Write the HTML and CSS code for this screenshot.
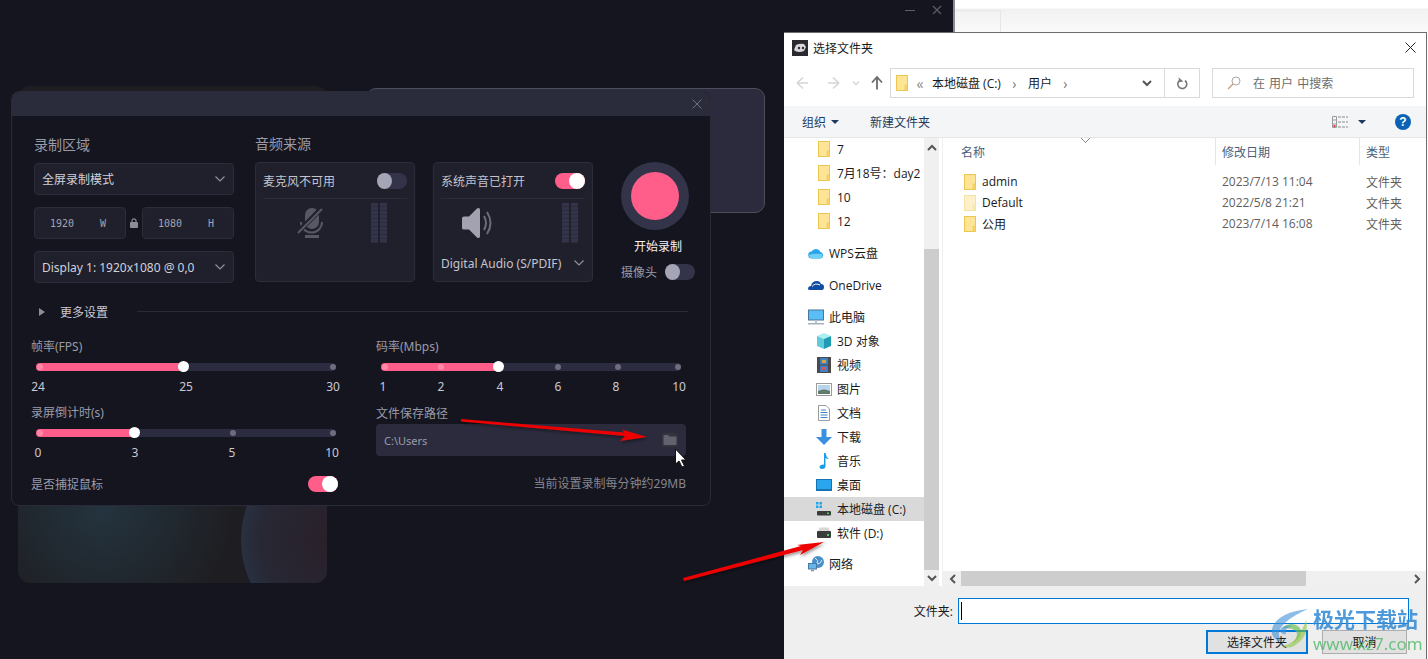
FILE: index.html
```html
<!DOCTYPE html>
<html lang="zh-CN">
<head>
  <meta charset="UTF-8" />
  <title>选择文件夹</title>
  <link rel="stylesheet" href="styles.css">
</head>
<body>
  <svg class="defs" width="0" height="0">
    <symbol id="folder" viewBox="0 0 12 16">
      <rect x="0.5" y="0.5" width="11" height="15" fill="#fde595" stroke="#ecc651"/>
      <rect x="9" y="10" width="2.5" height="5.5" fill="#f7d569" stroke="#ecc651" stroke-width="0.6"/>
    </symbol>
    <symbol id="drive" viewBox="0 0 16 12">
      <path d="M2 4 L3.5 0.5 H12.5 L14 4 Z" fill="#d8d8d8"/>
      <rect x="1" y="4" width="14" height="7" rx="1" fill="#3b3b3b"/>
      <rect x="11" y="7" width="2" height="2" fill="#41d65a"/>
    </symbol>
    <symbol id="chev" viewBox="0 0 12 8">
      <path d="M1.5 1.5 L6 6 L10.500 1.5" fill="none" stroke="currentColor" stroke-width="1.2"/>
    </symbol>
    <symbol id="bold-chev" viewBox="0 0 10 7">
      <path d="M1 1 L5 5 L9 1" fill="none" stroke="#555" stroke-width="2"/>
    </symbol>
  </svg>

  <!-- windows behind -->
  <div class="back-app">
    <div class="back-app-tab"></div>
  </div>
  <div class="back-ctrls">
    <span class="min-line"></span>
    <svg width="10" height="10" viewBox="0 0 10 10"><path d="M1 1 L9 9 M9 1 L1 9" stroke="#5d5d69" stroke-width="1.200"/></svg>
  </div>
  <div class="back-card"><div class="back-planet"></div></div>
  <div class="back-box"></div>

  <!-- recorder settings -->
  <div class="panel">
    <div class="panel-title">
      <svg width="10" height="10" viewBox="0 0 10 10"><path d="M0.500 0.500 L9.500 9.500 M9.500 0.500 L0.500 9.500" stroke="#6e6e7c" stroke-width="1"/></svg>
    </div>
    <div class="top">
      <div class="area">
        <div class="sec-title">录制区域</div>
        <div class="select"><span>全屏录制模式</span><svg class="chev" width="12" height="8"><use href="#chev"/></svg></div>
        <div class="size-row">
          <div class="size-box"><span>1920</span><span class="mono">W</span></div>
          <svg class="lock" width="8" height="10" viewBox="0 0 8 10"><path d="M2 4 V2.800 a2 2 0 0 1 4 0 V4" fill="none" stroke="#8d8d99" stroke-width="1.200"/><rect y="4" width="8" height="6" rx="1" fill="#8d8d99"/></svg>
          <div class="size-box"><span>1080</span><span class="mono">H</span></div>
        </div>
        <div class="select"><span>Display 1: 1920x1080 @ 0,0</span><svg class="chev" width="12" height="8"><use href="#chev"/></svg></div>
      </div>

      <div class="audio">
        <div class="sec-title">音频来源</div>
        <div class="audio-cards">
          <div class="audio-card mic">
            <div class="audio-head"><span>麦克风不可用</span><span class="toggle"></span></div>
            <div class="audio-body">
              <svg class="audio-icon" width="28" height="32" viewBox="0 0 28 32">
                <rect x="8" y="1" width="14" height="21" rx="7" fill="#575765"/>
                <path d="M4 15 a10.500 10.500 0 0 0 21 0" fill="none" stroke="#575765" stroke-width="2"/>
                <rect x="8" y="28" width="14" height="3" fill="#575765"/>
                <path d="M1 25 L25 1" stroke="#20202c" stroke-width="5"/>
                <path d="M1 26 L25 2" stroke="#575765" stroke-width="2"/>
              </svg>
              <div class="meter"></div>
            </div>
          </div>
          <div class="audio-card sys">
            <div class="audio-head"><span>系统声音已打开</span><span class="toggle on"></span></div>
            <div class="audio-body">
              <svg class="audio-icon speaker" width="34" height="32" viewBox="0 0 34 32">
                <path d="M1 11 Q1 9.500 3 9.500 H8 L16 1.500 Q19 0 19 3 V29 Q19 32 16 30.500 L8 22.500 H3 Q1 22.500 1 21 Z" fill="#a2a2b0"/>
                <path d="M23 9 Q27 16 23 23" fill="none" stroke="#6d6d7a" stroke-width="2"/>
                <path d="M26 5 Q33 16 26 27" fill="none" stroke="#6d6d7a" stroke-width="2"/>
              </svg>
              <div class="meter"></div>
            </div>
            <div class="audio-device"><span>Digital Audio (S/PDIF)</span><svg class="chev" width="12" height="8"><use href="#chev"/></svg></div>
          </div>
        </div>
      </div>

      <div class="record">
        <div class="record-btn"><span class="record-dot"></span></div>
        <div class="record-text">开始录制</div>
        <div class="camera"><span>摄像头</span><span class="toggle"></span></div>
      </div>
    </div>

    <div class="more">
      <span class="more-arrow"></span>
      <span class="more-text">更多设置</span>
      <span class="more-line"></span>
    </div>

    <div class="settings">
      <div class="field">
        <div class="field-label">帧率(FPS)</div>
        <div class="track">
          <span class="fill" style="width: 49%"></span>
          <span class="dot pale" style="left: 1px"></span>
          <span class="dot" style="left: 98%"></span>
          <span class="thumb" style="left: 49%"></span>
        </div>
        <div class="ticks">
          <span style="left: 2px">24</span>
          <span style="left: 150px">25</span>
          <span style="left: 297px">30</span>
        </div>
      </div>
      <div class="field">
        <div class="field-label">码率(Mbps)</div>
        <div class="track">
          <span class="fill" style="width: 39%"></span>
          <span class="dot pale" style="left: 1px"></span>
          <span class="dot pale" style="left: 19%"></span>
          <span class="dot" style="left: 58%"></span>
          <span class="dot" style="left: 78%"></span>
          <span class="dot" style="left: 98%"></span>
          <span class="thumb" style="left: 39%"></span>
        </div>
        <div class="ticks">
          <span style="left: 2px">1</span>
          <span style="left: 60px">2</span>
          <span style="left: 119px">4</span>
          <span style="left: 177px">6</span>
          <span style="left: 235px">8</span>
          <span style="left: 298px">10</span>
        </div>
      </div>
      <div class="field">
        <div class="field-label">录屏倒计时(s)</div>
        <div class="track">
          <span class="fill" style="width: 32.700%"></span>
          <span class="dot pale" style="left: 1px"></span>
          <span class="dot" style="left: 64.700%"></span>
          <span class="dot" style="left: 98%"></span>
          <span class="thumb" style="left: 32.700%"></span>
        </div>
        <div class="ticks">
          <span style="left: 2px">0</span>
          <span style="left: 99px">3</span>
          <span style="left: 196px">5</span>
          <span style="left: 296px">10</span>
        </div>
      </div>
      <div class="field">
        <div class="field-label path-label">文件保存路径</div>
        <div class="path-box">
          <span>C:\Users</span>
          <svg class="path-folder" width="16" height="14" viewBox="0 0 16 14">
            <rect x="0" y="0" width="16" height="14" rx="2" fill="#33333d"/>
            <path d="M1.500 3 Q1.500 2 2.500 2 H6 L7.500 3.500 H13.500 Q14.500 3.500 14.500 4.500 V11 Q14.500 12 13.500 12 H2.500 Q1.500 12 1.500 11 Z" fill="#62626f"/>
          </svg>
        </div>
      </div>
      <div class="capture"><span>是否捕捉鼠标</span><span class="toggle on"></span></div>
      <div class="size-note">当前设置录制每分钟约29MB</div>
    </div>
  </div>

  <!-- file dialog -->
  <div class="dialog">
    <div class="dlg-title">
      <svg class="dlg-logo" width="16" height="16" viewBox="0 0 16 16">
        <rect width="16" height="16" fill="#2a2a30"/>
        <path d="M2 10 L4 5 Q8 3 12 4 L14 7 L12 11 Q8 12.500 4 11.500 Z" fill="#d8d8dc"/>
        <circle cx="7" cy="8" r="1.200" fill="#2a2a30"/><circle cx="11" cy="8" r="1.200" fill="#2a2a30"/>
      </svg>
      <span class="dlg-title-text">选择文件夹</span>
      <svg class="dlg-close" width="11" height="11" viewBox="0 0 11 11"><path d="M0.500 0.500 L10.500 10.500 M10.500 0.500 L0.500 10.500" stroke="#222" stroke-width="1"/></svg>
    </div>

    <div class="dlg-nav">
      <svg class="nav-btns" width="98" height="16" viewBox="0 0 98 16">
        <path d="M2 8 H13 M2 8 L8 2.500 M2 8 L8 13.500" fill="none" stroke="#d5d5d5" stroke-width="1.600"/>
        <path d="M44 8 H33 M44 8 L38 2.500 M44 8 L38 13.500" fill="none" stroke="#d5d5d5" stroke-width="1.600"/>
        <path d="M58 6.500 L61 9.500 L64 6.500" fill="none" stroke="#d5d5d5" stroke-width="1.300"/>
        <path d="M82 14.500 V2 M77 7.500 L82 2 L87 7.500" fill="none" stroke="#6b6b6b" stroke-width="1.800"/>
      </svg>
      <div class="address">
        <svg width="12" height="16"><use href="#folder"/></svg>
        <span class="crumb-more">«</span>
        <span>本地磁盘 (C:)</span>
        <span class="crumb-sep">›</span>
        <span>用户</span>
        <span class="crumb-sep">›</span>
        <svg class="addr-chev" width="10" height="7"><use href="#bold-chev"/></svg>
        <span class="addr-refresh">
          <svg width="12" height="13" viewBox="0 0 12 13"><path d="M4 3.200 A4.500 4.500 0 1 0 9 3.500" fill="none" stroke="#777" stroke-width="1.600"/><path d="M3 0 V5 H7 Z" fill="#777" transform="rotate(-10 4 3)"/></svg>
        </span>
      </div>
      <div class="search">
        <svg width="14" height="14" viewBox="0 0 14 14"><circle cx="9" cy="5" r="4" fill="none" stroke="#a9a9a9"/><path d="M6 8 L1 13" stroke="#c49a7c" stroke-width="1.200"/></svg>
        <span>在 用户 中搜索</span>
      </div>
    </div>

    <div class="dlg-tools">
      <span class="tool">组织</span><span class="tool-caret organize-caret"></span>
      <span class="tool new-folder">新建文件夹</span>
      <span class="tool-spacer"></span>
      <svg class="view-icon" width="16" height="12" viewBox="0 0 16 12">
        <path d="M0.500 0.500 H4.500 V11.500 H0.500 Z M0.500 4 H4.500 M0.500 8 H4.500" fill="none" stroke="#9a9a9a"/>
        <rect x="1.500" y="9" width="2" height="2" fill="#d33"/>
        <path d="M6 1 H16 M6 6 H16 M6 11 H16" stroke="#8b8b8b" stroke-dasharray="3 1"/>
      </svg>
      <span class="tool-caret view-caret"></span>
      <span class="help">?</span>
    </div>

    <div class="dlg-main">
      <div class="tree">
        <div class="tree-row lvl2 first"><svg class="ico" width="12" height="16"><use href="#folder"/></svg>7</div>
        <div class="tree-row lvl2"><svg class="ico" width="12" height="16"><use href="#folder"/></svg>7月18号：day2</div>
        <div class="tree-row lvl2"><svg class="ico" width="12" height="16"><use href="#folder"/></svg>10</div>
        <div class="tree-row lvl2"><svg class="ico" width="12" height="16"><use href="#folder"/></svg>12</div>

        <div class="tree-row lvl1 group"><svg class="ico" width="16" height="12" viewBox="0 0 16 12"><path d="M4 11.500 a3.500 3.500 0 0 1 -0.500 -7 a5 5 0 0 1 9 0.500 a3.300 3.300 0 0 1 -0.500 6.500 Z" fill="#27a6ea"/><path d="M1 8 Q6 6 14 7 Q15 11 12 11.500 H4 Q1.500 11.500 1 8" fill="#6fd0f2"/></svg>WPS云盘</div>
        <div class="tree-row lvl1 group"><svg class="ico" width="16" height="12" viewBox="0 0 16 12"><path d="M0 10 Q0 7 3 7 Q4 2 9 2 Q12 2 13 5 Q16 5 16 8 Q16 11 14 11 H2 Q0 11 0 10 Z" fill="#0f4da3"/><path d="M4 7.500 Q7 3.500 12 6" fill="none" stroke="#fff" stroke-width="1"/></svg>OneDrive</div>
        <div class="tree-row lvl1 group"><svg class="ico" width="16" height="16" viewBox="0 0 16 16"><rect x="0.500" y="1" width="15" height="10" fill="#59bdf6" stroke="#47789a"/><path d="M7 11 H9 V14 H7 Z" fill="#b7c3cc"/><rect y="14" width="16" height="1.500" fill="#a6b2bb"/></svg>此电脑</div>
        <div class="tree-row lvl2"><svg class="ico" width="16" height="16" viewBox="0 0 16 16"><path d="M8 0 L15 3 L8 6 L1 3 Z" fill="#aaf0f2"/><path d="M1 3 L8 6 V16 L1 13 Z" fill="#5dcbd9"/><path d="M15 3 L8 6 V16 L15 13 Z" fill="#1f9cb4"/></svg>3D 对象</div>
        <div class="tree-row lvl2"><svg class="ico" width="14" height="16" viewBox="0 0 14 16"><rect width="14" height="16" fill="#4a4a4a"/><rect x="3" y="1" width="8" height="6.500" fill="#3f7fc4"/><rect x="3" y="8.500" width="8" height="6.500" fill="#3f7fc4"/><rect x="5" y="3" width="4" height="3" fill="#d9a23c"/><rect x="5" y="10" width="4" height="3" fill="#d0566a"/></svg>视频</div>
        <div class="tree-row lvl2"><svg class="ico" width="16" height="13" viewBox="0 0 16 13"><rect x="0.500" y="0.500" width="15" height="12" fill="#fff" stroke="#9a9a9a"/><rect x="2" y="2" width="12" height="9" fill="#b8d4ea"/><path d="M2 8 Q8 5 14 8 V11 H2 Z" fill="#5f7d6a"/></svg>图片</div>
        <div class="tree-row lvl2"><svg class="ico" width="12" height="16" viewBox="0 0 12 16"><path d="M0.500 0.500 H8 L11.500 4 V15.500 H0.500 Z" fill="#fff" stroke="#9a9a9a"/><path d="M3 5 H8 M2.500 7.500 H9.500 M2.500 10 H9.500 M2.500 12.500 H9.500" stroke="#3f83c6"/></svg>文档</div>
        <div class="tree-row lvl2"><svg class="ico" width="16" height="16" viewBox="0 0 16 16"><path d="M5.500 0 H10.500 V8 H16 L8 16 L0 8 H5.500 Z" fill="#3a8fe0"/></svg>下载</div>
        <div class="tree-row lvl2"><svg class="ico" width="12" height="16" viewBox="0 0 12 16"><path d="M6 0 H7.500 Q8 4 11 6 Q9 6 7.500 5 V13 Q7.500 16 4 16 Q1.500 16 1.500 14 Q1.500 11.500 6 11.500 Z" fill="#1b9be8"/></svg>音乐</div>
        <div class="tree-row lvl2"><svg class="ico" width="16" height="12" viewBox="0 0 16 12"><rect x="0.500" y="0.500" width="15" height="11" fill="#2aa6ee" stroke="#1774b4"/><rect x="1" y="10" width="14" height="1.500" fill="#1774b4"/></svg>桌面</div>
        <div class="tree-row lvl2 selected"><svg class="ico" width="16" height="14" viewBox="0 0 16 14"><rect x="0" y="0" width="2.500" height="2.500" fill="#1ea7ef"/><rect x="3.500" y="0" width="2.500" height="2.500" fill="#1ea7ef"/><rect x="0" y="3.500" width="2.500" height="2.500" fill="#1ea7ef"/><rect x="3.500" y="3.500" width="2.500" height="2.500" fill="#1ea7ef"/><path d="M2 9 L4 6.500 H13 L15 9 Z" fill="#d8d8d8"/><rect x="1" y="9" width="14" height="4.500" rx="1" fill="#3b3b3b"/><rect x="11" y="10.500" width="2" height="1.500" fill="#41d65a"/></svg>本地磁盘 (C:)</div>
        <div class="tree-row lvl2"><svg class="ico" width="16" height="12"><use href="#drive"/></svg>软件 (D:)</div>
        <div class="tree-row lvl1 net"><svg class="ico" width="16" height="16" viewBox="0 0 16 16"><circle cx="10" cy="6" r="6" fill="#4b8fcb"/><path d="M7 2 Q11 4 9 8 Q13 8 14 4" fill="none" stroke="#cfe4f4"/><rect x="0.500" y="7.500" width="8" height="5.500" fill="#63b7ec" stroke="#4a7ba0"/><path d="M3 14.500 H6" stroke="#7e94a6" stroke-width="1.500"/></svg>网络</div>
      </div>

      <div class="vscroll">
        <svg class="sb-up" width="10" height="7"><use href="#bold-chev"/></svg>
        <div class="vscroll-thumb"></div>
        <svg class="sb-down" width="10" height="7"><use href="#bold-chev"/></svg>
      </div>

      <div class="files">
        <div class="file-head">
          <span class="sort-caret"></span>
          <span>名称</span><span>修改日期</span><span>类型</span>
        </div>
        <div class="file-list">
          <div class="file-row"><span class="file-name"><svg width="12" height="16"><use href="#folder"/></svg>admin</span><span>2023/7/13 11:04</span><span>文件夹</span></div>
          <div class="file-row"><span class="file-name"><svg class="faded" width="12" height="16"><use href="#folder"/></svg>Default</span><span>2022/5/8 21:21</span><span>文件夹</span></div>
          <div class="file-row"><span class="file-name"><svg width="12" height="16"><use href="#folder"/></svg>公用</span><span>2023/7/14 16:08</span><span>文件夹</span></div>
        </div>
        <div class="hscroll">
          <svg width="7" height="10" viewBox="0 0 7 10"><path d="M6 1 L2 5 L6 9" fill="none" stroke="#555" stroke-width="2"/></svg>
          <div class="hscroll-thumb"></div>
          <svg width="7" height="10" viewBox="0 0 7 10"><path d="M1 1 L5 5 L1 9" fill="none" stroke="#555" stroke-width="2"/></svg>
        </div>
      </div>
    </div>

    <div class="dlg-foot">
      <div class="foot-row">
        <label class="foot-label">文件夹:</label>
        <div class="foot-input"><span class="caret"></span></div>
      </div>
      <div class="foot-btns">
        <div class="btn primary">选择文件夹</div>
        <div class="btn">取消</div>
      </div>
    </div>
  </div>

  <!-- annotations on top of the screenshot -->
  <svg class="marks" width="1428" height="659" viewBox="0 0 1428 659">
    <defs>
      <filter id="shade" x="-10%" y="-50%" width="120%" height="200%"><feDropShadow dx="1" dy="2" stdDeviation="1.500" flood-color="#000" flood-opacity="0.400"/></filter>
    </defs>
    <polygon filter="url(#shade)" fill="#ee0000" points="461,419 624,432.500 622,429.500 647,437 620,441 625,436 461,421.500"/>
    <polygon filter="url(#shade)" fill="#ee0000" points="683,578 801,546 797,545 824,542 800,555 803,550 684,581"/>
    <polygon fill="#fff" stroke="#111" stroke-width="1" points="675.500,449 675.500,464 679,461 682,467 684.500,466 681.500,460 686,460"/>
  </svg>

  <div class="watermark">
    <svg width="44" height="44" viewBox="0 0 44 44">
      <path d="M40 3 Q12 6 5 20 Q0 32 14 36 Q6 26 18 16 Q26 9 40 3 Z" fill="#3f90d8" opacity="0.600"/>
      <path d="M14 22 Q24 14 32 22 Q36 30 24 38 Q34 26 24 23 Q18 22 14 22 Z" fill="#6cbf5a" opacity="0.700"/>
      <path d="M38 14 Q42 30 26 40 Q20 43 14 40 Q30 38 38 14 Z" fill="#8dc63f" opacity="0.600"/>
      <path d="M12 24 Q16 18 24 20 Q16 22 18 28 Q13 29 12 24 Z" fill="#3f90d8" opacity="0.600"/>
    </svg>
    <div class="wm-text">
      <div class="wm-name">极光下载站</div>
      <div class="wm-url">www.xz7.com</div>
    </div>
  </div>
</body>
</html>
```

FILE: styles.css
```css
* {
  box-sizing: border-box;
}
html,
body {
  margin: 0;
  height: 659px;
  overflow: hidden;
}
body {
  position: relative;
  width: 1428px;
  background: #15151f;
  font-family: "Noto Sans", "Noto Sans CJK SC", sans-serif;
  font-size: 12px;
  color: #c9c9d3;
}
.defs {
  position: absolute;
}

/* background windows */
.back-app {
  position: absolute;
  left: 953px;
  top: 0;
  width: 475px;
  height: 659px;
  background: linear-gradient(#fff 8px, #f1f1f1 9px, #fafafa 32px);
  border-left: 2px solid #8b8b95;
}
.back-app-tab {
  width: 46px;
  height: 24px;
  margin-top: 10px;
  border: 1px solid #e6e6e6;
  border-left: none;
}
.back-ctrls {
  position: absolute;
  left: 905px;
  top: 5px;
  display: flex;
  align-items: center;
  gap: 17px;
}
.min-line {
  width: 10px;
  height: 1px;
  background: #5d5d69;
}
.back-card {
  position: absolute;
  left: 18px;
  top: 86px;
  width: 309px;
  height: 497px;
  border-radius: 12px;
  overflow: hidden;
  background: radial-gradient(circle 130px at 85px 420px, #24343f, #1e1e22 100%), #1e1e22;
}
.back-planet {
  position: absolute;
  left: 223px;
  top: 354px;
  width: 200px;
  height: 200px;
  border-radius: 50%;
  background: radial-gradient(circle at 50% 50%, #2a1f28 0, #272733 55%, #2c4258 100%);
}
.back-box {
  position: absolute;
  left: 366px;
  top: 88px;
  width: 399px;
  height: 125px;
  background: #2b2b3d;
  border: 1px solid #4d4d5c;
  border-radius: 10px;
}

/* recorder panel */
.panel {
  position: absolute;
  left: 11px;
  top: 91px;
  width: 700px;
  height: 415px;
  background: #15151f;
  border: 1px solid #2a2a38;
  border-radius: 8px;
  overflow: hidden;
}
.panel-title {
  height: 24px;
  display: flex;
  align-items: center;
  justify-content: flex-end;
  padding-right: 8px;
  background: #2a2b3b;
}
.top {
  display: flex;
  padding: 18px 0 0 22px;
}
.area {
  width: 200px;
  margin-top: 1px;
  display: flex;
  flex-direction: column;
}
.sec-title {
  height: 20px;
  line-height: 20px;
  font-size: 14px;
  color: #9b9ba8;
  margin-bottom: 8px;
}
.select {
  height: 32px;
  padding: 0 7px;
  display: flex;
  align-items: center;
  justify-content: space-between;
  background: #20202c;
  border: 1px solid #2c2c3a;
  border-radius: 4px;
  color: #d0d0da;
}
.chev {
  color: #8f8f9c;
  flex: none;
}
.size-row {
  display: flex;
  align-items: center;
  justify-content: space-between;
  margin: 12px 0;
}
.size-box {
  width: 92px;
  height: 32px;
  padding: 0 19px 0 15px;
  display: flex;
  align-items: center;
  justify-content: space-between;
  background: #20202c;
  border: 1px solid #2c2c3a;
  border-radius: 4px;
  font-family: "DejaVu Sans Mono", monospace;
  font-size: 10px;
  color: #a4a4b0;
}
.lock {
  flex: none;
}
.audio {
  margin-left: 21px;
}
.audio-cards {
  display: flex;
  gap: 18px;
}
.audio-card {
  width: 160px;
  height: 120px;
  padding: 0 7px;
  background: #20202c;
  border: 1px solid #2c2c3a;
  border-radius: 4px;
}
.audio-head {
  height: 36px;
  display: flex;
  align-items: center;
  justify-content: space-between;
  border-bottom: 1px solid #2d2d3a;
  color: #c4c4ce;
}
.toggle {
  position: relative;
  width: 30px;
  height: 16px;
  border-radius: 8px;
  background: #33334a;
  flex: none;
}
.toggle::after {
  content: "";
  position: absolute;
  left: 0;
  top: 0;
  width: 15px;
  height: 16px;
  border-radius: 50%;
  background: #a5a5b5;
}
.toggle.on {
  background: #ff5e8a;
}
.toggle.on::after {
  left: auto;
  right: 0;
  width: 16px;
  background: #fff;
}
.audio-body {
  position: relative;
  height: 52px;
  padding-top: 4px;
  display: flex;
  align-items: flex-start;
  justify-content: flex-end;
}
.mic .audio-body {
  padding-right: 20px;
}
.sys .audio-body {
  padding-right: 7px;
}
.audio-icon {
  position: absolute;
  left: 34px;
  top: 8px;
}
.audio-icon.speaker {
  left: 20px;
  top: 8px;
}
.meter {
  width: 16px;
  height: 40px;
  background:
    repeating-linear-gradient(#33334a 0 3px, #2b2b3e 3px 4px);
  border-left: 0;
  position: relative;
}
.meter::after {
  content: "";
  position: absolute;
  left: 7px;
  top: 0;
  width: 2px;
  height: 40px;
  background: #20202c;
}
.audio-device {
  height: 26px;
  margin-top: -1px;
  display: flex;
  align-items: center;
  justify-content: space-between;
  color: #c4c4ce;
  white-space: nowrap;
}
.record {
  width: 74px;
  margin: 28px 0 0 28px;
  display: flex;
  flex-direction: column;
  align-items: flex-start;
}
.record-btn {
  width: 68px;
  height: 68px;
  border-radius: 50%;
  background: #33334a;
  display: flex;
  align-items: center;
  justify-content: center;
}
.record-dot {
  width: 48px;
  height: 48px;
  border-radius: 50%;
  background: #ff5e8a;
}
.record-text {
  height: 20px;
  line-height: 20px;
  margin: 7px 0 0 13px;
  color: #f2f2f6;
}
.camera {
  width: 74px;
  margin-top: 6px;
  display: flex;
  align-items: center;
  justify-content: space-between;
  color: #9b9ba8;
}
.more {
  height: 20px;
  margin-top: 19px;
  display: flex;
  align-items: center;
}
.more-arrow {
  margin-left: 27px;
  border-left: 6px solid #8d8d99;
  border-top: 4px solid transparent;
  border-bottom: 4px solid transparent;
}
.more-text {
  margin-left: 15px;
  color: #c9c9d3;
}
.more-line {
  flex: 1;
  height: 1px;
  margin: -2px 22px 0 29px;
  background: #2a2a38;
}
.settings {
  display: grid;
  grid-template-columns: 310px 310px;
  column-gap: 35px;
  row-gap: 6px;
  padding: 15px 0 0 19px;
}
.field-label {
  height: 20px;
  line-height: 20px;
  color: #9b9ba8;
}
.path-label {
  height: 21px;
  line-height: 22px;
}
.track {
  position: relative;
  height: 8px;
  margin: 6px 5px 0;
  border-radius: 4px;
  background: #2c2c40;
}
.fill {
  position: absolute;
  left: 0;
  top: 0;
  height: 8px;
  border-radius: 4px;
  background: #ff5e8a;
}
.dot {
  position: absolute;
  top: 1px;
  width: 6px;
  height: 6px;
  border-radius: 50%;
  background: #6d6d7b;
}
.dot.pale {
  background: #ff8aa8;
}
.thumb {
  position: absolute;
  top: -2px;
  width: 11px;
  height: 11px;
  margin-left: -5px;
  border-radius: 50%;
  background: #fff;
}
.ticks {
  position: relative;
  height: 20px;
  margin-top: 6px;
  line-height: 20px;
  color: #c9c9d3;
}
.ticks span {
  position: absolute;
  left: 0;
  top: 0;
  margin-left: 5px;
  transform: translateX(-50%);
}
.path-box {
  height: 32px;
  padding: 0 8px;
  display: flex;
  align-items: center;
  justify-content: space-between;
  background: #2b2b3d;
  border-radius: 4px;
  color: #9b9ba8;
  font-size: 11px;
}
.capture {
  margin-top: 5px;
  height: 20px;
  display: flex;
  align-items: center;
  justify-content: space-between;
  padding-right: 3px;
  color: #9b9ba8;
}
.size-note {
  margin-top: 5px;
  height: 20px;
  line-height: 20px;
  text-align: right;
  color: #85858f;
}

/* file dialog */
.dialog {
  position: absolute;
  left: 784px;
  top: 32px;
  width: 643px;
  height: 627px;
  display: flex;
  flex-direction: column;
  background: #fff;
  border-top: 1px solid #6e6e6e;
  border-right: 1px solid #6e6e6e;
  font-family: "Open Sans", "Noto Sans CJK SC", sans-serif;
  font-size: 12px;
  color: #1a1a1a;
}
.dlg-title {
  height: 29px;
  padding: 0 10px 0 8px;
  display: flex;
  align-items: center;
  flex: none;
}
.dlg-title-text {
  margin-left: 5px;
}
.dlg-close {
  margin-left: auto;
}
.dlg-nav {
  height: 44px;
  flex: none;
  padding: 6px 12px 0 11px;
  display: flex;
  align-items: flex-start;
}
.nav-btns {
  margin: 7px 0 0 0;
  flex: none;
}
.address {
  width: 310px;
  height: 30px;
  margin-left: -3px;
  padding-left: 5px;
  display: flex;
  align-items: center;
  border: 1px solid #d9d9d9;
  gap: 7px;
}
.crumb-more {
  color: #8a8a8a;
  width: 10px;
  text-align: center;
  font-size: 14px;
}
.crumb-sep {
  color: #777;
  width: 17px;
  text-align: center;
  margin: 0 -2px;
  font-size: 14px;
}
.addr-chev {
  margin-left: auto;
  margin-right: 5px;
}
.addr-refresh {
  width: 35px;
  height: 28px;
  display: flex;
  align-items: center;
  justify-content: center;
  border-left: 1px solid #d9d9d9;
}
.search {
  width: 202px;
  height: 30px;
  margin-left: 12px;
  padding-left: 14px;
  display: flex;
  align-items: center;
  gap: 12px;
  border: 1px solid #d9d9d9;
  color: #6d6d6d;
  word-spacing: 1px;
}
.dlg-tools {
  height: 32px;
  flex: none;
  display: flex;
  align-items: center;
  padding: 0 15px 0 18px;
  background: #f3f5f7;
  border-bottom: 1px solid #e6e6e6;
  color: #1e3a5f;
}
.tool-caret {
  border-top: 4px solid #1e3a5f;
  border-left: 4px solid transparent;
  border-right: 4px solid transparent;
}
.organize-caret {
  margin-left: 5px;
}
.new-folder {
  margin-left: 31px;
}
.tool-spacer {
  flex: 1;
}
.view-caret {
  margin: 0 0 0 10px;
}
.help {
  width: 16px;
  height: 16px;
  margin-left: 29px;
  border-radius: 50%;
  background: #0b62b5;
  color: #fff;
  font: bold 12px/16px "Liberation Sans", sans-serif;
  text-align: center;
}
.dlg-main {
  flex: 1;
  min-height: 0;
  display: flex;
}
.tree {
  width: 140px;
  flex: none;
  overflow: hidden;
}
.tree-row {
  height: 24px;
  display: flex;
  align-items: center;
  white-space: nowrap;
}
.tree-row.first {
  margin-top: -1px;
}
.tree-row .ico {
  margin-right: 5px;
  flex: none;
}
.lvl1 {
  padding-left: 24px;
}
.lvl2 {
  padding-left: 32px;
}
.lvl2 svg[width="12"] {
  margin-left: 2px;
  margin-right: 7px;
}
.lvl2 svg[width="14"] {
  margin-left: 1px;
  margin-right: 6px;
}
.group {
  margin-top: 8px;
}
.selected {
  background: #d9d9d9;
}
.net {
  margin-top: 7px;
}
.vscroll {
  width: 15px;
  margin-right: 3px;
  flex: none;
  display: flex;
  flex-direction: column;
  align-items: center;
  background: #f0f0f0;
}
.sb-up {
  flex: none;
  margin: 6px 0 98px;
  transform: rotate(180deg);
}
.vscroll-thumb {
  align-self: stretch;
  flex: 1;
  background: #cdcdcd;
}
.sb-down {
  flex: none;
  margin: 5px 0 4px;
}
.files {
  flex: 1;
  min-width: 0;
  display: flex;
  flex-direction: column;
  border-left: 1px solid #f0f0f0;
}
.file-head,
.file-row {
  display: grid;
  grid-template-columns: 272px 144px 1fr;
}
.file-head {
  position: relative;
  height: 27px;
  flex: none;
  color: #4c607a;
}
.file-head span {
  display: flex;
  align-items: center;
  padding-left: 6px;
  border-left: 1px solid #e5e5e5;
}
.file-head span:nth-child(2) {
  padding-left: 18px;
  border-left: none;
}
.file-head .sort-caret {
  position: absolute;
  left: 138px;
  top: 0;
  width: 9px;
  height: 5px;
  padding: 0;
  border: none;
  background:
    linear-gradient(45deg, transparent 46%, #8c8c8c 46% 58%, transparent 58%) 0 0 / 5px 5px no-repeat,
    linear-gradient(-45deg, transparent 46%, #8c8c8c 46% 58%, transparent 58%) 4px 0 / 5px 5px no-repeat;
}
.file-list {
  flex: 1;
  padding-top: 6px;
}
.file-row {
  height: 21px;
  align-items: center;
  color: #5f5f5f;
}
.file-row span {
  padding-left: 7px;
}
.file-row .file-name {
  padding-left: 21px;
  display: flex;
  align-items: center;
  gap: 6px;
  color: #1a1a1a;
}
.faded {
  opacity: 0.5;
}
.hscroll {
  height: 15px;
  flex: none;
  display: flex;
  align-items: center;
  background: #f0f0f0;
  padding: 0 5px 0 6px;
}
.hscroll-thumb {
  width: 345px;
  height: 15px;
  margin: 0 auto 0 5px;
  background: #cdcdcd;
}
.dlg-foot {
  height: 73px;
  flex: none;
  padding-top: 12px;
  background: #efefef;
}
.foot-row {
  display: flex;
  align-items: center;
  padding-right: 17px;
}
.foot-label {
  width: 169px;
  margin-right: 5px;
  text-align: right;
}
.foot-input {
  flex: 1;
  height: 26px;
  padding: 3px 2px;
  background: #fff;
  border: 1px solid #0078d7;
}
.caret {
  display: block;
  width: 1px;
  height: 18px;
  background: #000;
}
.foot-btns {
  display: flex;
  justify-content: flex-end;
  gap: 14px;
  margin-top: 6px;
  padding-right: 19px;
}
.btn {
  width: 85px;
  height: 24px;
  display: flex;
  align-items: center;
  justify-content: center;
  background: #e1e1e1;
  border: 1px solid #adadad;
}
.btn.primary {
  width: 102px;
  border: 2px solid #0078d7;
}

/* annotations */
.marks {
  position: absolute;
  left: 0;
  top: 0;
  pointer-events: none;
}
.watermark {
  position: absolute;
  left: 1268px;
  top: 606px;
  display: flex;
  gap: 1px;
}
.wm-name {
  font: bold 21px/24px "Noto Sans CJK SC", sans-serif;
  color: #3a8ed6;
  opacity: 0.9;
}
.wm-url {
  margin-top: 6px;
  font: 17px/16px "Noto Sans", sans-serif;
  color: #4fb868;
  opacity: 0.8;
  white-space: nowrap;
}
```
